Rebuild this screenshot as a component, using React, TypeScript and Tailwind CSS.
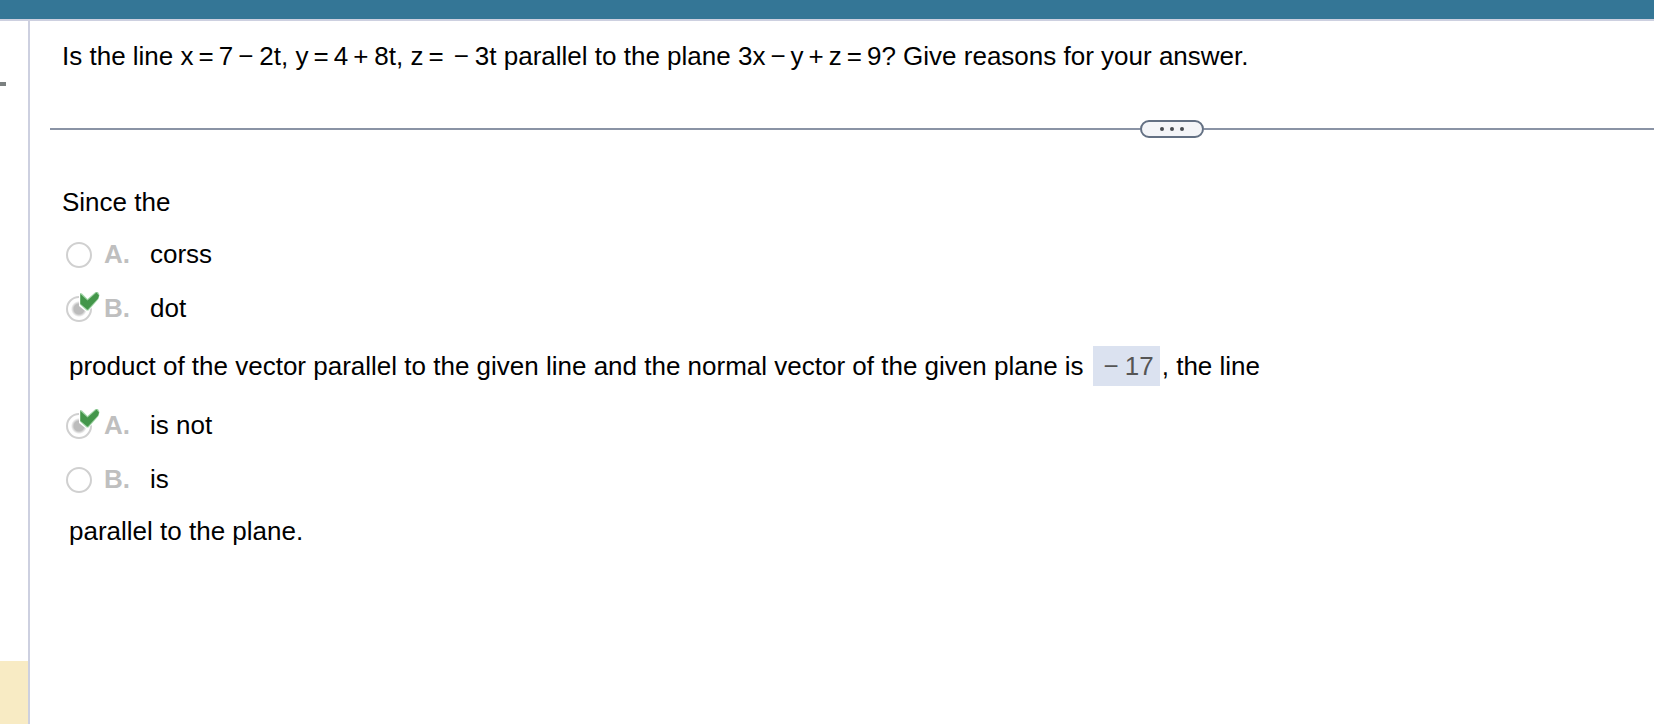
import type { ReactNode } from "react";

function Op({ children }: { children: ReactNode }) {
  return <span className="mx-[5px]">{children}</span>;
}

function TermOp({ children }: { children: ReactNode }) {
  return <span className="ml-[5px] mr-1.5">{children}</span>;
}

function CorrectMark() {
  return (
    <svg
      className="pointer-events-none absolute -top-1 left-3 h-6 w-6"
      viewBox="0 0 24 24"
      aria-hidden="true"
    >
      <path d="M1 0 L18 0 L19 8 L15 15 L9 20 L6 18 L1 14 Z" fill="#fff" />
      <path d="M2 1 L4 1.5 L9.5 7 L17.5 0 L20 0 L21.5 3 L20.5 7 L10.5 18.5 L8.5 18.5 L2 12.5 Z" fill="#9fd3a5" />
      <path d="M2.4 2 L9.5 8.5 L18.5 0.5 L21 3.5 L20 6.5 L9.6 17.8 L2.4 11.8 Z" fill="#43964a" />
    </svg>
  );
}

type ChoiceProps = {
  group: string;
  letter: string;
  text: string;
  correct?: boolean;
};

function Choice({ group, letter, text, correct = false }: ChoiceProps) {
  return (
    <label className="flex items-center">
      <span className="w-[38px] shrink-0 pt-0.5">
        <span className="relative flex">
          <input
            type="radio"
            name={group}
            defaultChecked={correct}
            className="h-[26px] w-[26px] appearance-none rounded-full border-2 border-[#d0d0d0] bg-white checked:bg-[radial-gradient(circle,#bcbcbc_0_5px,#fff_8px)]"
          />
          {correct && <CorrectMark />}
        </span>
      </span>
      <span className="w-[46px] shrink-0 font-bold text-[#bfbfbf]">{letter}.</span>
      <span>{text}</span>
    </label>
  );
}

export default function App() {
  return (
    <div className="flex min-h-screen flex-col bg-white font-['Liberation_Sans',Arial,sans-serif] text-[26px] leading-[30px] text-black">
      <header className="h-[21px] border-b-2 border-[#cdd0e0] bg-[#347696]" />
      <div className="flex grow">
        <aside className="flex w-[30px] shrink-0 flex-col justify-between border-r-2 border-[#cdd0e0] pt-[61px]">
          <div className="h-1 w-1.5 bg-[#7b8080]" />
          <div className="h-[63px] bg-[#f8ebc4]" />
        </aside>
        <main className="min-w-0 grow pt-5 pb-10">
          <p className="pl-8">
            Is the line x<Op>=</Op>7<TermOp>−</TermOp>2t, y<Op>=</Op>4<TermOp>+</TermOp>8t, z
            <Op>=</Op>
            <TermOp>−</TermOp>3t parallel to the plane 3x<Op>−</Op>y<Op>+</Op>z<Op>=</Op>9? Give
            reasons for your answer.
          </p>

          <div className="mt-[49px] flex items-center pl-5">
            <div className="h-0.5 grow-[109] bg-[#8a93a5]" />
            <button
              type="button"
              aria-label="Resize panels"
              className="flex h-[18px] w-16 items-center justify-center gap-1.5 rounded-full border-2 border-[#637083] bg-[#f4f5f8]"
            >
              <span className="h-1 w-1 rounded-full bg-[#484c52]" />
              <span className="h-1 w-1 rounded-full bg-[#484c52]" />
              <span className="h-1 w-1 rounded-full bg-[#484c52]" />
            </button>
            <div className="h-0.5 grow-[45] bg-[#8a93a5]" />
          </div>

          <section className="mt-[49px] pl-8">
            <p>Since the</p>
            <div className="mt-[22px] flex flex-col gap-6 pl-1">
              <Choice group="product" letter="A" text="corss" />
              <Choice group="product" letter="B" text="dot" correct />
            </div>
            <p className="mt-[23px] flex items-center pl-[7px]">
              <span>
                product of the vector parallel to the given line and the normal vector of the given
                plane is
              </span>
              <span className="ml-[9px] mr-0.5 flex h-10 shrink-0 items-center bg-[#dbe2f0] pl-[11px] pr-1.5 text-[#555]">
                <span className="mr-1.5">−</span>17
              </span>
              <span className="shrink-0">, the line</span>
            </p>
            <div className="mt-6 flex flex-col gap-6 pl-1">
              <Choice group="relation" letter="A" text="is not" correct />
              <Choice group="relation" letter="B" text="is" />
            </div>
            <p className="mt-[22px] pl-[7px]">parallel to the plane.</p>
          </section>
        </main>
      </div>
    </div>
  );
}
